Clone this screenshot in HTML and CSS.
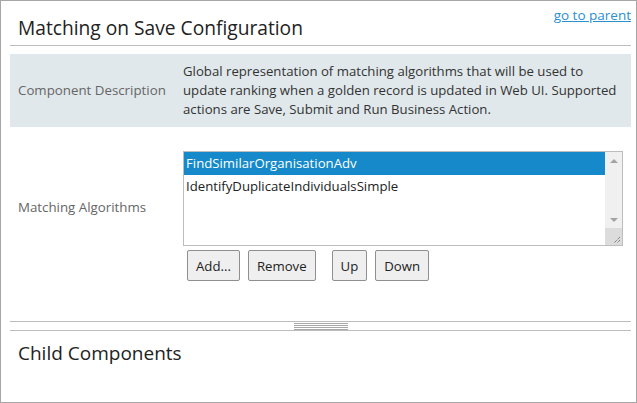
FILE: index.html
```html
<!DOCTYPE html>
<html>
<head>
<meta charset="utf-8">
<link rel="stylesheet" href="styles.css">
</head>
<body>
<div class="window">
  <div class="header">
    <h1 class="title">Matching on Save Configuration</h1>
    <a class="parent-link" href="#">go to parent</a>
  </div>
  <div class="form">
    <div class="row row-desc">
      <div class="label">Component Description</div>
      <div class="value">Global representation of matching algorithms that will be used to<br>update ranking when a golden record is updated in Web UI. Supported<br>actions are Save, Submit and Run Business Action.</div>
    </div>
    <div class="row row-algos">
      <div class="label label-algos">Matching Algorithms</div>
      <div class="value">
        <div class="listbox">
          <div class="items">
            <div class="item selected">FindSimilarOrganisationAdv</div>
            <div class="item">IdentifyDuplicateIndividualsSimple</div>
          </div>
          <div class="scrollbar">
            <div class="arrow up"></div>
            <div class="track"></div>
            <div class="arrow down"></div>
            <div class="grip">
              <svg width="17" height="17" viewBox="0 0 17 17"><path d="M15 9 L9 15 M15 12 L12 15" stroke="#555" stroke-width="1" stroke-dasharray="1 1" fill="none"/></svg>
            </div>
          </div>
        </div>
        <div class="buttons">
          <button class="btn">Add...</button>
          <button class="btn">Remove</button>
          <button class="btn btn-sep">Up</button>
          <button class="btn">Down</button>
        </div>
      </div>
    </div>
  </div>
  <div class="splitter">
    <div class="splitter-grip"></div>
  </div>
  <h2 class="subtitle">Child Components</h2>
</div>
</body>
</html>
```
FILE: styles.css
```css
* { box-sizing: border-box; }
html, body { margin: 0; padding: 0; }
body {
  font-family: "Open Sans", "Noto Sans", sans-serif;
  color: #333;
  background: #fff;
}
.window {
  width: 637px;
  height: 403px;
  border: 1px solid #a6a6a6;
  padding: 0 5px 0 9px;
  overflow: hidden;
}
.header {
  display: flex;
  justify-content: space-between;
  align-items: flex-start;
  border-bottom: 1px solid #bcbcbc;
  height: 45px;
}
.title {
  margin: 0;
  padding: 14px 0 0 8px;
  font-size: 19.2px;
  font-weight: normal;
  line-height: 26px;
  color: #222;
}
.parent-link {
  margin-top: 5px;
  font-size: 13.5px;
  line-height: 18px;
  color: #2a90d0;
  text-decoration: underline;
}
.form { margin-top: 8px; }
.row {
  display: grid;
  grid-template-columns: 173px 1fr;
}
.row-desc {
  background: #e0e8eb;
  padding: 8px 0;
  align-items: center;
}
.label {
  padding-left: 8px;
  font-size: 13.3px;
  line-height: 19px;
  color: #666;
}
.value {
  font-size: 13.2px;
  line-height: 19px;
  color: #333;
}
.row-algos {
  padding-top: 24px;
  align-items: start;
}
.label-algos { padding-top: 47px; }
.listbox {
  display: flex;
  width: 440px;
  height: 95px;
  border: 1px solid #bdbdbd;
  background: #fff;
}
.items { flex: 1; }
.item {
  height: 23px;
  line-height: 23px;
  padding-left: 2px;
  font-size: 13.2px;
  color: #222;
}
.item.selected {
  background: #1589c9;
  color: #fff;
}
.scrollbar {
  width: 17px;
  background: #f0f0f0;
  display: flex;
  flex-direction: column;
}
.arrow {
  height: 17px;
  display: flex;
  align-items: center;
  justify-content: center;
}
.arrow::after {
  content: "";
  border-left: 4px solid transparent;
  border-right: 4px solid transparent;
}
.arrow.up::after { border-bottom: 4px solid #a3a3a3; }
.arrow.down::after { border-top: 4px solid #a3a3a3; }
.track { flex: 1; }
.grip {
  height: 17px;
  background: #dcdcdc;
  line-height: 0;
}
.buttons {
  display: flex;
  gap: 8px;
  margin: 4px 0 0 4px;
}
.btn {
  height: 31px;
  padding: 0 8px;
  font-family: "Open Sans", "Noto Sans", sans-serif;
  font-size: 13.2px;
  color: #222;
  background: #efefef;
  border: 1px solid #8f8f8f;
  border-radius: 2px;
}
.btn-sep { margin-left: 8px; }
.splitter {
  margin-top: 40px;
  height: 10px;
  border-top: 1px solid #bcbcbc;
  border-bottom: 1px solid #bcbcbc;
  display: flex;
  justify-content: center;
  padding-top: 1px;
}
.splitter-grip {
  width: 54px;
  height: 7px;
  background: repeating-linear-gradient(to bottom, #a8a8a8 0 1px, transparent 1px 2px);
}
.subtitle {
  margin: 0;
  padding: 10px 0 0 8px;
  font-size: 19px;
  font-weight: normal;
  line-height: 25px;
  color: #222;
}
```
